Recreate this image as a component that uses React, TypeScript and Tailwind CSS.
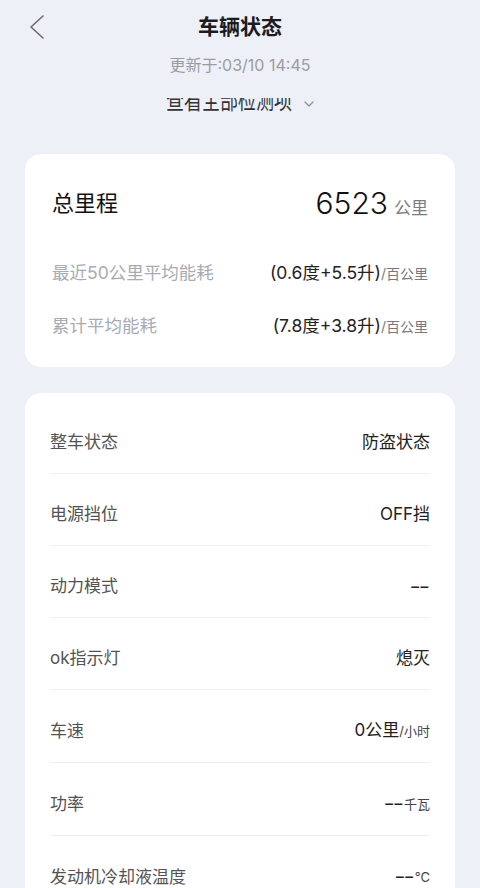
import React from "react";

const font = { fontFamily: 'Inter, "Noto Sans CJK SC", sans-serif' };

type Row = { label: string; value: string; unit?: string };

const rows: Row[] = [
  { label: "整车状态", value: "防盗状态" },
  { label: "电源挡位", value: "OFF挡" },
  { label: "动力模式", value: "−−" },
  { label: "ok指示灯", value: "熄灭" },
  { label: "车速", value: "0公里", unit: "/小时" },
  { label: "功率", value: "−−", unit: "千瓦" },
  { label: "发动机冷却液温度", value: "−−", unit: "°C" },
];

function StatusRow({ row }: { row: Row }) {
  const dashes = row.value === "−−";
  return (
    <div className="flex items-center justify-between pt-[28px] pb-[19px] border-b border-[#eceef2]">
      <span className="text-[17px] leading-[24px] text-[#535353]">{row.label}</span>
      <span className="flex items-baseline text-[17px] leading-[24px] text-[#222]">
        <span className={dashes ? "tracking-[-2px] pr-[2px]" : ""}>{row.value}</span>
        {row.unit && <span className="text-[13px] text-[#444]">{row.unit}</span>}
      </span>
    </div>
  );
}

export default function App() {
  return (
    <div className="min-h-screen bg-[#edf0f7] pb-10" style={font}>
      {/* header */}
      <div className="grid grid-cols-[60px_1fr_60px] items-center h-[54px]">
        <button className="flex items-center pl-[29px] h-full">
          <svg width="16" height="24" viewBox="0 0 16 24" fill="none">
            <path d="M14 1 L2 12 L14 23" stroke="#6b6b70" strokeWidth="1.6" strokeLinecap="round" strokeLinejoin="round" />
          </svg>
        </button>
        <h1 className="text-center text-[21px] font-semibold text-[#1c1c1e]">车辆状态</h1>
        <div />
      </div>
      <p className="text-center text-[16px] leading-[22px] text-[#9b9ca0]">更新于:03/10 14:45</p>

      {/* link, top half hidden under the header */}
      <div className="mt-[22px] h-[14px] overflow-hidden flex items-end justify-center gap-[12px]">
        <span className="text-[18px] leading-[18px] text-[#333] origin-bottom scale-y-[1.45] -mb-[1px]">查看全部检测项</span>
        <svg width="10" height="14" viewBox="0 0 10 14" fill="none" className="self-start">
          <path d="M1 4 L5 8 L9 4" stroke="#8e8e93" strokeWidth="1.2" strokeLinecap="round" strokeLinejoin="round" />
        </svg>
      </div>

      {/* mileage card */}
      <div className="mx-[25px] mt-[42px] rounded-[16px] bg-white px-[27px] pt-[30px] pb-[29px]">
        <div className="flex h-[38px] items-center justify-between">
          <span className="text-[22px] text-[#111]">总里程</span>
          <span className="flex items-baseline gap-[6px]">
            <span className="text-[30px] font-light leading-[38px] text-[#111]">6523</span>
            <span className="text-[17px] text-[#7b7d80]">公里</span>
          </span>
        </div>
        <div className="mt-[39px] flex h-[24px] items-center justify-between">
          <span className="text-[17.5px] text-[#a7abb3]">最近50公里平均能耗</span>
          <span className="flex items-baseline">
            <span className="text-[17.5px] text-[#222]">(0.6度+5.5升)</span>
            <span className="text-[14px] text-[#77797d]">/百公里</span>
          </span>
        </div>
        <div className="mt-[29px] flex h-[24px] items-center justify-between">
          <span className="text-[17.5px] text-[#a7abb3]">累计平均能耗</span>
          <span className="flex items-baseline">
            <span className="text-[17.5px] text-[#222]">(7.8度+3.8升)</span>
            <span className="text-[14px] text-[#77797d]">/百公里</span>
          </span>
        </div>
      </div>

      {/* status card */}
      <div className="mx-[25px] mt-[26px] rounded-[16px] bg-white px-[25px] pt-[9px] pb-[20px]">
        {rows.map((r) => (
          <StatusRow key={r.label} row={r} />
        ))}
      </div>
    </div>
  );
}
